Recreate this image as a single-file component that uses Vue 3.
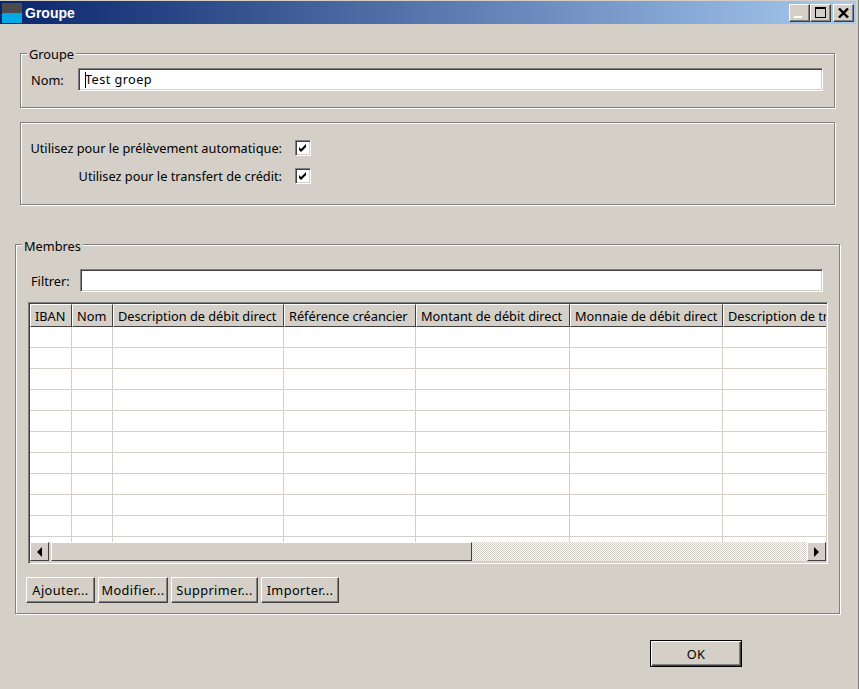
<script setup>
const columns = [
  { label: 'IBAN', width: 42 },
  { label: 'Nom', width: 41 },
  { label: 'Description de débit direct', width: 171 },
  { label: 'Référence créancier', width: 132 },
  { label: 'Montant de débit direct', width: 154 },
  { label: 'Monnaie de débit direct', width: 153 },
  { label: 'Description de transfert', width: 170 }
]
const rows = Array.from({ length: 11 }, (_, i) => i)
const actions = [
  { label: 'Ajouter...', width: 69 },
  { label: 'Modifier...', width: 70 },
  { label: 'Supprimer...', width: 87 },
  { label: 'Importer...', width: 78 }
]
</script>

<template>
  <div class="window">
    <header class="titlebar">
      <div class="app-icon"></div>
      <span class="title">Groupe</span>
      <div class="win-buttons">
        <button class="win-btn"><span class="min-glyph"></span></button>
        <button class="win-btn"><span class="max-glyph"></span></button>
        <button class="win-btn close">
          <svg width="11" height="10" viewBox="0 0 11 10"><path d="M1 0.5 L10 9.5 M10 0.5 L1 9.5" stroke="#000" stroke-width="2.4" fill="none" /></svg>
        </button>
      </div>
    </header>

    <section class="group group-name">
      <span class="legend">Groupe</span>
      <div class="field-row">
        <label class="nom-label">Nom:</label>
        <div class="input name-input"><span class="caret"></span>Test groep</div>
      </div>
    </section>

    <section class="group group-use">
      <div class="check-row">
        <span class="check-label">Utilisez pour le prélèvement automatique:</span>
        <span class="check"><svg width="8" height="8" viewBox="0 0 8 8"><path d="M0 3 L2 5 L7 0 V3 L2 8 L0 6 Z" fill="#000" /></svg></span>
      </div>
      <div class="check-row">
        <span class="check-label">Utilisez pour le transfert de crédit:</span>
        <span class="check"><svg width="8" height="8" viewBox="0 0 8 8"><path d="M0 3 L2 5 L7 0 V3 L2 8 L0 6 Z" fill="#000" /></svg></span>
      </div>
    </section>

    <section class="group group-members">
      <span class="legend members-legend">Membres</span>
      <div class="field-row">
        <label class="filter-label">Filtrer:</label>
        <div class="input"></div>
      </div>

      <div class="table">
        <div class="table-view">
          <div class="thead">
            <div v-for="c in columns" :key="c.label" class="th" :style="{ width: c.width + 'px' }">{{ c.label }}</div>
          </div>
          <div class="tbody">
            <div v-for="r in rows" :key="r" class="tr">
              <div v-for="c in columns" :key="c.label" class="td" :style="{ width: c.width + 'px' }"></div>
            </div>
          </div>
        </div>
        <div class="scrollbar">
          <button class="sb-btn"><span class="arrow left"></span></button>
          <div class="sb-thumb"></div>
          <div class="sb-track"></div>
          <button class="sb-btn"><span class="arrow right"></span></button>
        </div>
      </div>

      <div class="actions">
        <button v-for="a in actions" :key="a.label" class="btn" :style="{ width: a.width + 'px' }">{{ a.label }}</button>
      </div>
    </section>

    <footer class="footer">
      <button class="btn ok">OK</button>
    </footer>
  </div>
</template>

<style>
html, body { margin: 0; background: #d4d0c8; }
</style>

<style scoped>
.window {
  box-sizing: border-box;
  width: 859px;
  height: 689px;
  padding: 1px 2px 0 0;
  border-right: 1px solid #808080;
  background: #d4d0c8;
  color: #000;
  font-family: "Noto Sans", "Liberation Sans", sans-serif;
  font-size: 12.75px;
  overflow: hidden;
  display: flex;
  flex-direction: column;
}
.titlebar {
  height: 23px;
  flex: none;
  display: flex;
  align-items: center;
  padding: 0 2px 0 2px;
  background: linear-gradient(90deg, #0a246a, #a6caf0);
}
.app-icon {
  width: 20px;
  height: 20px;
  background: linear-gradient(#4b4b4b 50%, #00a8e6 50%);
}
.title {
  margin-left: 3px;
  color: #fff;
  font-family: "Liberation Sans", sans-serif;
  font-weight: bold;
  font-size: 14px;
}
.win-buttons { margin-left: auto; display: flex; }
.win-btn {
  box-sizing: border-box;
  width: 21px;
  height: 18px;
  padding: 0;
  background: #d4d0c8;
  border: 1px solid;
  border-color: #fff #404040 #404040 #fff;
  box-shadow: inset -1px -1px 0 #808080;
  display: flex;
  align-items: center;
  justify-content: center;
}
.win-btn.close { margin-left: 2px; }
.min-glyph { width: 8px; height: 2px; background: #fff; margin-top: 9px; margin-right: 3px; }
.max-glyph { box-sizing: border-box; width: 11px; height: 11px; border: 1px solid #000; border-top-width: 2px; }

.group {
  position: relative;
  flex: none;
  box-sizing: border-box;
  border: 1px solid #808080;
  box-shadow: inset 1px 1px 0 #fff, 1px 1px 0 #fff;
}
.legend {
  position: absolute;
  top: -8px;
  left: 6px;
  padding: 0 2px;
  line-height: 16px;
  background: #d4d0c8;
}
.members-legend { top: -7px; }
.group-name {
  margin: 29px 0 0 20px;
  width: 815px;
  height: 55px;
  padding: 14px 11px 0 10px;
}
.field-row { display: flex; align-items: center; }
.nom-label { width: 47px; }
.filter-label { width: 49px; padding-left: 3px; }
.input {
  flex: 1;
  box-sizing: border-box;
  height: 23px;
  background: #fff;
  border: 1px solid;
  border-color: #808080 #fff #fff #808080;
  box-shadow: inset 1px 1px 0 #404040, inset -1px -1px 0 #d4d0c8;
  line-height: 20px;
  padding-left: 6px;
  position: relative;
  white-space: nowrap;
}
.name-input { letter-spacing: 0.4px; }
.caret {
  position: absolute;
  left: 6px;
  top: 3px;
  width: 1px;
  height: 16px;
  background: #000;
}
.group-use {
  margin: 14px 0 0 20px;
  width: 815px;
  height: 83px;
  padding: 11px 0 0 0;
}
.check-row { display: flex; align-items: center; height: 28px; }
.check-label { width: 261px; text-align: right; white-space: nowrap; }
.check {
  box-sizing: border-box;
  margin-left: 13px;
  width: 16px;
  height: 16px;
  background: #fff;
  border: 1px solid;
  border-color: #808080 #fff #fff #808080;
  box-shadow: inset 1px 1px 0 #404040, inset -1px -1px 0 #d4d0c8;
  display: flex;
  align-items: center;
  justify-content: center;
}
.group-members {
  margin: 39px 0 0 15px;
  width: 825px;
  height: 370px;
  padding: 24px 16px 0 12px;
}
.table {
  margin: 10px -5px 0 0;
  box-sizing: border-box;
  height: 262px;
  border: 1px solid;
  border-color: #808080 #fff #fff #808080;
  box-shadow: inset 1px 1px 0 #404040, inset -1px -1px 0 #d4d0c8;
  padding: 1px 1px 2px 1px;
  display: flex;
  flex-direction: column;
}
.table-view { flex: 1; overflow: hidden; background: #fff; min-height: 0; }
.thead { display: flex; height: 23px; width: 1000px; }
.th {
  flex: none;
  box-sizing: border-box;
  height: 23px;
  line-height: 22px;
  padding-left: 4px;
  white-space: nowrap;
  overflow: hidden;
  background: #d4d0c8;
  border: 1px solid;
  border-color: #fff #404040 #404040 #fff;
}
.tbody { width: 1000px; }
.tr { display: flex; height: 21px; box-sizing: border-box; border-bottom: 1px solid #d4d0c8; }
.td { flex: none; box-sizing: border-box; height: 20px; border-right: 1px solid #d4d0c8; }
.scrollbar { display: flex; height: 19px; flex: none; }
.sb-btn {
  box-sizing: border-box;
  flex: none;
  width: 19px;
  height: 19px;
  padding: 0;
  background: #d4d0c8;
  border: 1px solid;
  border-color: #fff #404040 #404040 #fff;
  display: flex;
  align-items: center;
  justify-content: center;
}
.sb-thumb {
  flex: none;
  box-sizing: border-box;
  width: 421px;
  margin-left: 2px;
  height: 19px;
  background: #d4d0c8;
  border: 1px solid;
  border-color: #fff #404040 #404040 #fff;
}
.sb-track {
  flex: 1;
  background-color: #d4d0c8;
  background-image: repeating-conic-gradient(#fff 0 25%, #d4d0c8 0 50%);
  background-size: 2px 2px;
}
.arrow { width: 0; height: 0; border-top: 5px solid transparent; border-bottom: 5px solid transparent; }
.arrow.left { border-right: 5px solid #000; }
.arrow.right { border-left: 5px solid #000; }
.actions { display: flex; gap: 3px; margin: 13px 0 0 -2px; }
.btn {
  box-sizing: border-box;
  height: 26px;
  padding: 0;
  font: inherit;
  letter-spacing: 0.4px;
  color: #000;
  background: #d4d0c8;
  border: 1px solid;
  border-color: #fff #404040 #404040 #fff;
  box-shadow: inset -1px -1px 0 #808080;
  white-space: nowrap;
}
.footer { flex: none; margin: 26px 0 0 650px; }
.btn.ok {
  width: 92px;
  height: 27px;
  border: 1px solid #000;
  box-shadow: inset 1px 1px 0 #fff, inset -1px -1px 0 #404040, inset -2px -2px 0 #808080;
}
</style>
